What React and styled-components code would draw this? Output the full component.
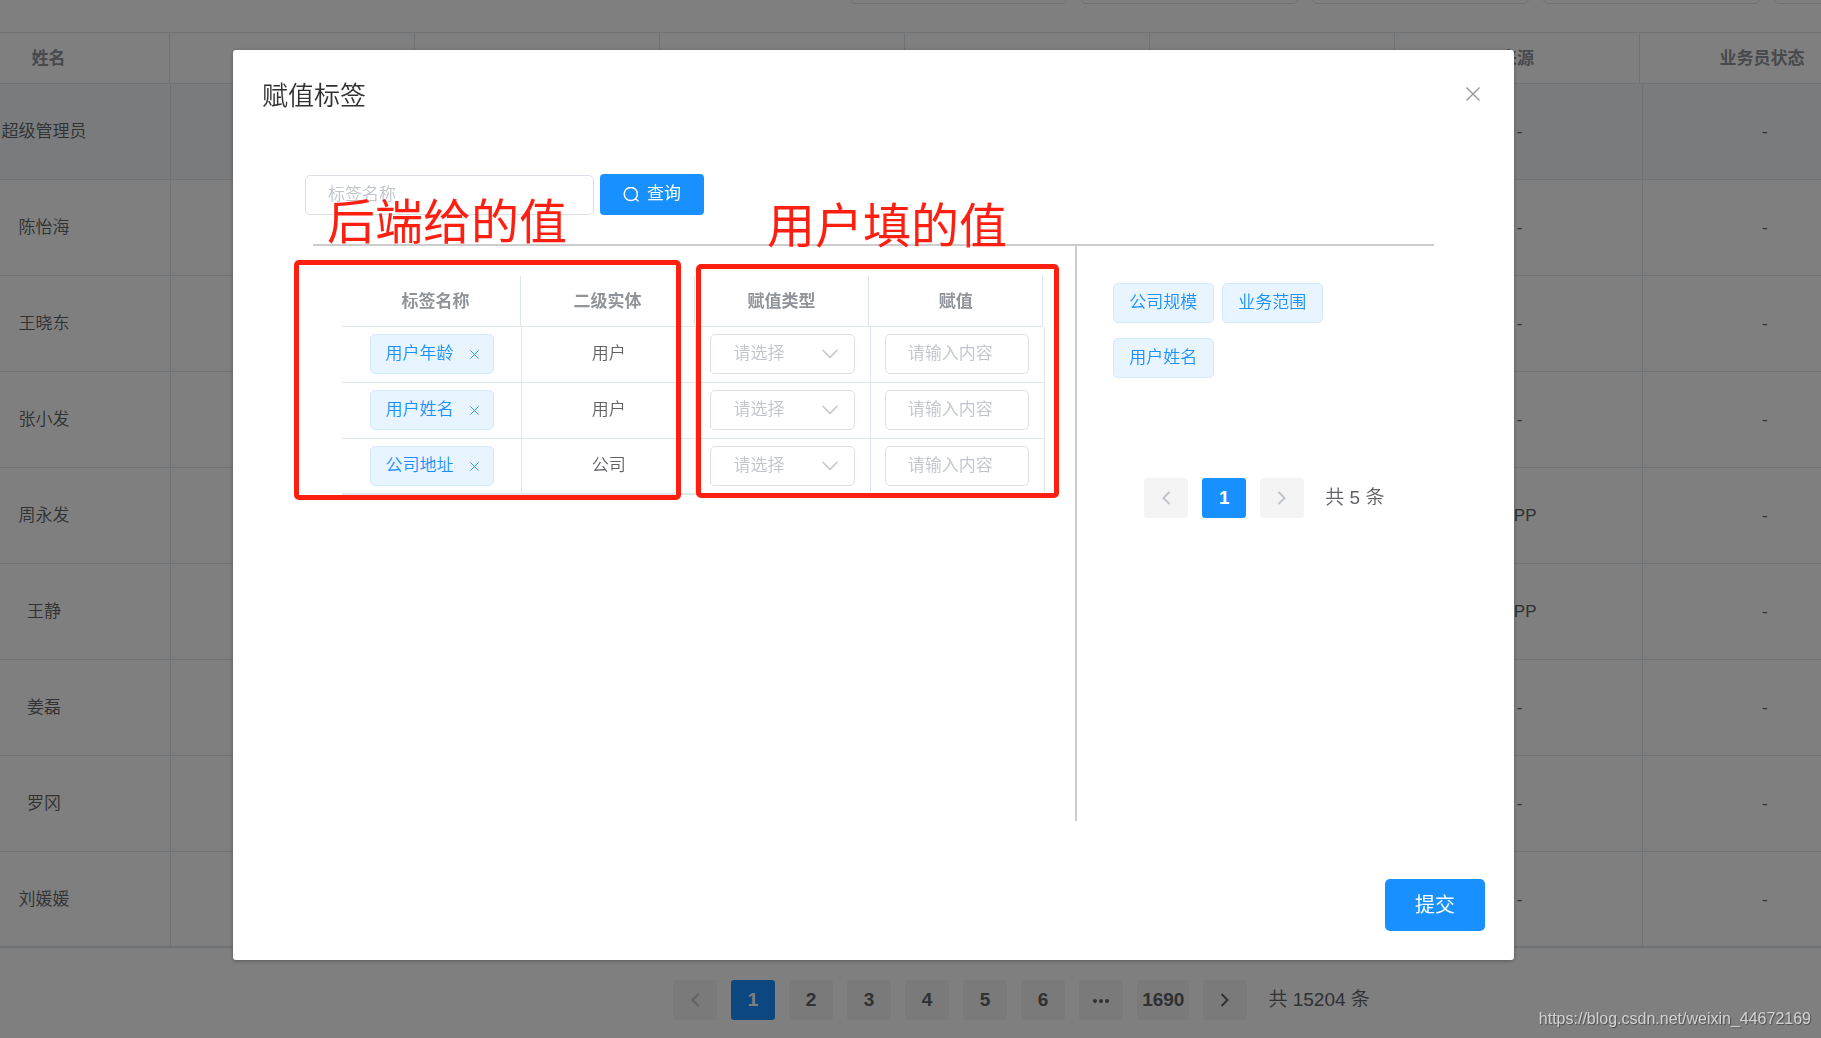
import React, { useState } from 'react';
import styled, { createGlobalStyle, css } from 'styled-components';

const GlobalStyle = createGlobalStyle`
    * {
        box-sizing: border-box;
    }

    body {
        margin: 0;
        overflow: hidden;
        background: #fff;
        color: #606266;
        font-family: 'Liberation Sans', 'Noto Sans CJK SC', sans-serif;
        font-size: 17px;
        font-weight: 350;
        line-height: 1.2;
    }

    button, input, select {
        margin: 0;
        font: inherit;
    }
`;

const Page = styled.main`
    overflow: hidden;
`;

const FilterBar = styled.div`
    display: flex;
    align-items: flex-end;
    gap: 14px;
    height: 4px;
    padding-left: 850px;
    margin-bottom: 28px;
`;

const TextInput = styled.input`
    width: 100%;
    height: 40px;
    padding: 0 22px;
    border: 1px solid #dcdfe6;
    border-radius: 5px;
    outline: none;
    background: #fff;
    color: #606266;

    &::placeholder {
        color: #c0c4cc;
        opacity: 1;
    }
`;

const FilterInput = styled(TextInput)`
    flex: 0 0 217px;
`;

const SearchInput = styled(TextInput)`
    width: 289px;
`;

const Table = styled.table`
    width: 100%;
    table-layout: fixed;
    border-collapse: separate;
    border-spacing: 0;
    text-align: center;
`;

const Th = styled.th`
    height: 51px;
    padding: 2px 0 0;
    border-right: 1px solid #dfe6ec;
    border-bottom: 1px solid #dfe6ec;
    color: #909399;
    font-weight: 700;
`;

const Td = styled.td`
    padding: 0;
    border-right: 1px solid #dfe6ec;
    border-bottom: 1px solid #dfe6ec;
`;

// the list is scrolled sideways, so its first column starts off screen
const StaffHead = styled(Table)`
    width: calc(100% + 136px);
    margin-left: -72px;
    border-top: 1px solid #dfe6ec;

    th:first-child {
        width: 242px;
    }
`;

const StaffBody = styled(Table)`
    width: calc(100% + 149px);
    margin-left: -82px;
    border-bottom: 1px solid #dfe6ec;

    td {
        height: 96px;
        padding-top: 2px;
    }

    td:first-child {
        width: 253px;
    }

    tr:first-child td {
        background: #f5f7fa;
    }

    tr:last-child td {
        height: 95px;
    }
`;

const PageFooter = styled.div`
    display: flex;
    justify-content: center;
    padding: 32px 0 18px 222px;
`;

const Pager = styled.nav`
    display: flex;
    align-items: center;
    gap: 14px;
    font-size: 19px;
`;

const PagerButton = styled.button`
    display: flex;
    align-items: center;
    justify-content: center;
    min-width: 44px;
    height: 40px;
    padding: 0 5px;
    border: 0;
    border-radius: 3px;
    background: ${(props) => (props.$active ? '#1890ff' : '#f4f4f5')};
    color: ${(props) => (props.$active ? '#fff' : '#606266')};
    font-weight: 700;

    &:disabled {
        color: #c0c4cc;
    }
`;

const Total = styled.span`
    margin-left: 7px;
`;

const Overlay = styled.div`
    position: fixed;
    inset: 0;
    padding: 50px 307px 0 233px;
    background: rgba(0, 0, 0, 0.5);
`;

const Dialog = styled.section`
    position: relative;
    border-radius: 3px;
    background: #fff;
    box-shadow: 0 1px 4px rgba(0, 0, 0, 0.3);
`;

const DialogHeader = styled.header`
    display: flex;
    align-items: center;
    justify-content: space-between;
    height: 92px;
    padding: 0 29px 4px;
`;

const Title = styled.h1`
    margin: 0;
    padding-top: 6px;
    color: #303133;
    font-size: 26px;
    font-weight: 350;
`;

const IconButton = styled.button`
    display: flex;
    padding: 5px;
    border: 0;
    background: none;
    color: ${(props) => props.$color};
`;

const SearchForm = styled.form`
    display: flex;
    align-items: center;
    gap: 6px;
    padding: 32px 72px 29px;
`;

const PrimaryButton = styled.button`
    display: flex;
    align-items: center;
    justify-content: center;
    gap: 8px;
    height: 41px;
    padding: 0 23px;
    border: 0;
    border-radius: 4px;
    background: #1890ff;
    color: #fff;
    font-weight: 400;

    ${(props) =>
        props.$large &&
        css`
            height: 52px;
            padding: 0 30px;
            border-radius: 5px;
            font-size: 20px;
        `}
`;

const Panels = styled.div`
    display: flex;
    margin: 0 80px;
    border-top: 2px solid #ccc;
`;

const Assigned = styled.div`
    flex: 0 0 68%;
    min-height: 575px;
    padding: 30px 30px 0 29px;
`;

const AssignHead = styled.div`
    padding-right: 2px;

    th:first-child {
        width: 179px;
        padding-left: 9px;
    }
`;

const AssignBody = styled(Table)`
    border-bottom: 1px solid #dfe6ec;

    td {
        height: 56px;
        padding-bottom: 1px;
    }

    td:first-child {
        width: 180px;
    }

    tr:last-child td {
        height: 55px;
        padding-bottom: 0;
    }
`;

const Available = styled.aside`
    flex: 1;
    padding: 37px 36px 0;
    border-left: 2px solid #ccc;
`;

const TagList = styled.div`
    display: flex;
    flex-wrap: wrap;
    gap: 15px 8px;
    margin-bottom: 100px;
`;

const Tag = styled.span`
    display: inline-flex;
    align-items: center;
    height: 40px;
    padding: 0 ${(props) => (props.$closable ? 9 : 16)}px 0 15px;
    border: 1px solid #d1e9ff;
    border-radius: 5px;
    background: #e8f4ff;
    color: #1890ff;
    vertical-align: middle;

    button {
        margin-left: 11px;
    }
`;

const SelectBox = styled.label`
    display: flex;
    align-items: center;
    margin: 0 15px 0 14px;

    svg {
        flex: none;
        margin-left: -33px;
        color: #c0c4cc;
        pointer-events: none;
    }
`;

const Select = styled.select`
    width: 100%;
    height: 40px;
    padding: 0 36px 0 22px;
    border: 1px solid #dcdfe6;
    border-radius: 5px;
    outline: none;
    appearance: none;
    background: #fff;
    color: #c0c4cc;
`;

const InputBox = styled.div`
    display: flex;
    margin: 0 15px 0 14px;
`;

const SidePager = styled.div`
    padding-left: 31px;
`;

const DialogFooter = styled.footer`
    display: flex;
    justify-content: flex-end;
    padding: 58px 29px 29px;
`;

const MarkBox = styled.div`
    position: absolute;
    top: ${(props) => props.$top}px;
    left: ${(props) => props.$left}px;
    width: ${(props) => props.$width}px;
    height: ${(props) => props.$height}px;
    border: 5px solid #ff1f10;
    border-radius: 5px;
    pointer-events: none;
`;

const MarkText = styled.span`
    position: absolute;
    top: ${(props) => props.$top}px;
    left: ${(props) => props.$left}px;
    color: #ff1f10;
    font-size: 48px;
    font-weight: 400;
    line-height: 56px;
    white-space: nowrap;
    pointer-events: none;
`;

const Watermark = styled.span`
    position: fixed;
    right: 10px;
    bottom: 9px;
    color: #d2d2d2;
    font-size: 16px;
    line-height: 20px;
    text-shadow: 1px 1px 1px rgba(0, 0, 0, 0.4);
`;

const CrossIcon = ({ size, stroke }) => (
    <svg width={size} height={size} viewBox="0 0 14 14" fill="none" stroke="currentColor" strokeWidth={stroke} aria-hidden="true">
        <path d="M0.5 0.5 13.5 13.5M13.5 0.5 0.5 13.5" />
    </svg>
);

const SearchIcon = () => (
    <svg width="16" height="16" viewBox="0 0 16 16" fill="none" stroke="currentColor" strokeWidth="1.5" strokeLinecap="round" aria-hidden="true">
        <circle cx="7.8" cy="7" r="6.6" />
        <path d="M12.8 12 15 14" />
    </svg>
);

const DownIcon = () => (
    <svg width="16" height="10" viewBox="0 0 16 10" fill="none" stroke="currentColor" strokeWidth="1.5" strokeLinecap="round" strokeLinejoin="round" aria-hidden="true">
        <path d="M1 1.2 8 8.4 15 1.2" />
    </svg>
);

const ArrowIcon = ({ next }) => (
    <svg width="10" height="14" viewBox="0 0 10 14" fill="none" stroke="currentColor" strokeWidth="2" aria-hidden="true">
        <path d={next ? 'M1.5 1 7.5 7 1.5 13' : 'M8.5 1 2.5 7 8.5 13'} />
    </svg>
);

const DotsIcon = () => (
    <svg width="18" height="6" viewBox="0 0 18 6" fill="currentColor" aria-hidden="true">
        <circle cx="3" cy="4" r="2" />
        <circle cx="9" cy="4" r="2" />
        <circle cx="15" cy="4" r="2" />
    </svg>
);

const staff = [
    { name: '超级管理员', source: '-' },
    { name: '陈怡海', source: '-' },
    { name: '王晓东', source: '-' },
    { name: '张小发', source: '-' },
    { name: '周永发', source: 'APP' },
    { name: '王静', source: 'APP' },
    { name: '姜磊', source: '-' },
    { name: '罗冈', source: '-' },
    { name: '刘媛媛', source: '-' },
];

const staffColumns = ['姓名', '', '', '', '', '', '来源', '业务员状态'];

const initialTags = [
    { name: '用户年龄', entity: '用户' },
    { name: '用户姓名', entity: '用户' },
    { name: '公司地址', entity: '公司' },
];

const StaffList = () => (
    <Page>
        <FilterBar>
            {[1, 2, 3, 4, 5].map((n) => (
                <FilterInput key={n} type="text" aria-label={`筛选条件${n}`} />
            ))}
        </FilterBar>
        <StaffHead>
            <thead>
                <tr>
                    {staffColumns.map((label, i) => (
                        <Th key={i} scope="col">{label}</Th>
                    ))}
                </tr>
            </thead>
        </StaffHead>
        <StaffBody>
            <tbody>
                {staff.map((person) => (
                    <tr key={person.name}>
                        <Td>{person.name}</Td>
                        <Td />
                        <Td />
                        <Td />
                        <Td />
                        <Td />
                        <Td>{person.source}</Td>
                        <Td>-</Td>
                    </tr>
                ))}
            </tbody>
        </StaffBody>
        <PageFooter>
            <Pager aria-label="列表分页">
                <PagerButton disabled aria-label="上一页"><ArrowIcon /></PagerButton>
                {[1, 2, 3, 4, 5, 6].map((n) => (
                    <PagerButton key={n} $active={n === 1}>{n}</PagerButton>
                ))}
                <PagerButton aria-label="向后翻页"><DotsIcon /></PagerButton>
                <PagerButton>1690</PagerButton>
                <PagerButton aria-label="下一页"><ArrowIcon next /></PagerButton>
                <Total>共 15204 条</Total>
            </Pager>
        </PageFooter>
    </Page>
);

const TagDialog = () => {
    const [tags, setTags] = useState(initialTags);

    const removeTag = (name) => setTags(tags.filter((tag) => tag.name !== name));

    return (
        <Dialog role="dialog" aria-labelledby="dialog-title">
            <DialogHeader>
                <Title id="dialog-title">赋值标签</Title>
                <IconButton type="button" $color="#909399" aria-label="关闭">
                    <CrossIcon size={14} stroke={1.3} />
                </IconButton>
            </DialogHeader>
            <SearchForm onSubmit={(e) => e.preventDefault()}>
                <SearchInput type="text" placeholder="标签名称" aria-label="标签名称" />
                <PrimaryButton type="submit">
                    <SearchIcon />
                    查询
                </PrimaryButton>
            </SearchForm>
            <Panels>
                <Assigned>
                    <AssignHead>
                        <Table>
                            <thead>
                                <tr>
                                    <Th scope="col">标签名称</Th>
                                    <Th scope="col">二级实体</Th>
                                    <Th scope="col">赋值类型</Th>
                                    <Th scope="col">赋值</Th>
                                </tr>
                            </thead>
                        </Table>
                    </AssignHead>
                    <AssignBody>
                        <tbody>
                            {tags.map((tag) => (
                                <tr key={tag.name}>
                                    <Td>
                                        <Tag $closable>
                                            {tag.name}
                                            <IconButton
                                                type="button"
                                                $color="#1890ff"
                                                aria-label={`移除${tag.name}`}
                                                onClick={() => removeTag(tag.name)}
                                            >
                                                <CrossIcon size={9} stroke={1.4} />
                                            </IconButton>
                                        </Tag>
                                    </Td>
                                    <Td>{tag.entity}</Td>
                                    <Td>
                                        <SelectBox>
                                            <Select aria-label={`${tag.name}赋值类型`} defaultValue="">
                                                <option value="">请选择</option>
                                            </Select>
                                            <DownIcon />
                                        </SelectBox>
                                    </Td>
                                    <Td>
                                        <InputBox>
                                            <TextInput type="text" placeholder="请输入内容" aria-label={`${tag.name}赋值`} />
                                        </InputBox>
                                    </Td>
                                </tr>
                            ))}
                        </tbody>
                    </AssignBody>
                </Assigned>
                <Available>
                    <TagList>
                        <Tag>公司规模</Tag>
                        <Tag>业务范围</Tag>
                        <Tag>用户姓名</Tag>
                    </TagList>
                    <SidePager>
                        <Pager aria-label="标签分页">
                            <PagerButton disabled aria-label="上一页"><ArrowIcon /></PagerButton>
                            <PagerButton $active>1</PagerButton>
                            <PagerButton disabled aria-label="下一页"><ArrowIcon next /></PagerButton>
                            <Total>共 5 条</Total>
                        </Pager>
                    </SidePager>
                </Available>
            </Panels>
            <DialogFooter>
                <PrimaryButton type="button" $large>提交</PrimaryButton>
            </DialogFooter>
            <MarkBox $top={210} $left={61} $width={387} $height={240} />
            <MarkBox $top={214} $left={463} $width={363} $height={234} />
            <MarkText $top={145} $left={94}>后端给的值</MarkText>
            <MarkText $top={149} $left={534}>用户填的值</MarkText>
        </Dialog>
    );
};

const App = () => (
    <>
        <GlobalStyle />
        <StaffList />
        <Overlay>
            <TagDialog />
        </Overlay>
        <Watermark>https://blog.csdn.net/weixin_44672169</Watermark>
    </>
);

export default App;
